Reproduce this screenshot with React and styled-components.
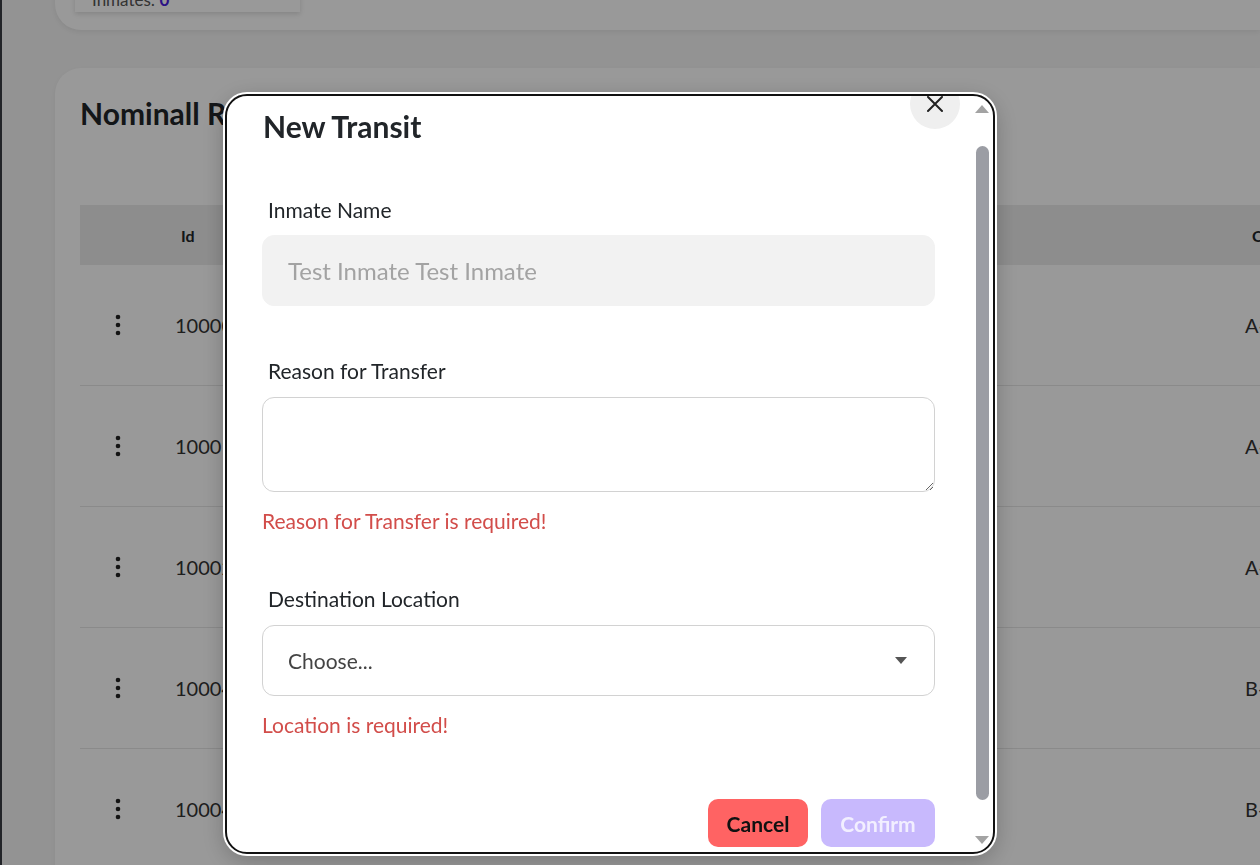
import React, { useLayoutEffect, useRef } from 'react'
import styled, { createGlobalStyle } from 'styled-components'

const GlobalStyle = createGlobalStyle`
   html, body {
      margin: 0;
      padding: 0;
      background: #f6f6f6;
      font-family: Lato, 'Noto Sans', 'Liberation Sans', sans-serif;
      color: #212529;
      overflow: hidden;
   }
   * { box-sizing: border-box; }
`

const Page = styled.div`
   height: 865px;
   overflow: hidden;
   border-left: 2px solid #3a3d44;
`
const PageInner = styled.div`
   padding: 20px 0 40px 53px;
   display: flex;
   flex-direction: column;
   gap: 38px;
`
const TopCard = styled.section`
   height: 140px;
   background: #fff;
   border-radius: 0 0 0 26px;
   box-shadow: 0 2px 6px rgba(0, 0, 0, 0.08);
   padding: 20px 20px 18px;
   display: flex;
`
const StatBox = styled.div`
   width: 225px;
   background: #fff;
   box-shadow: 0 2px 5px rgba(0, 0, 0, 0.14);
   display: flex;
   flex-direction: column;
   justify-content: flex-end;
   padding: 0 17px 2px;
   font-size: 17px;
   line-height: 20px;
   color: #555;
`
const StatValue = styled.b`
   color: #4a1fe0;
`
const ListCard = styled.section`
   background: #fff;
   border-radius: 26px 0 0 0;
   box-shadow: 0 2px 6px rgba(0, 0, 0, 0.06);
   padding: 28px 0 0 25px;
   overflow: hidden;
`
const ListTitle = styled.h2`
   margin: 0 0 75px;
   font-size: 30px;
   line-height: 34px;
   font-weight: 700;
   color: #212529;
   white-space: nowrap;
`
const Table = styled.div`
   width: 1300px;
`
const HeadRow = styled.div`
   display: grid;
   grid-template-columns: 95px 1077px 1fr;
   height: 60px;
   align-items: center;
   background: #ececec;
   font-size: 16px;
   font-weight: 700;
`
const Row = styled.div`
   display: grid;
   grid-template-columns: 95px 1070px 1fr;
   height: 121px;
   align-items: center;
   border-bottom: 1px solid #e6e6e6;
   font-size: 20px;
   color: #333;
`
const HeadCell = styled.div`
   padding-left: ${(p) => p.$pad || 0}px;
`
const Cell = styled.div`
   padding-left: ${(p) => p.$pad || 0}px;
   display: flex;
   align-items: center;
`

const Backdrop = styled.div`
   position: fixed;
   inset: 0;
   background: rgba(0, 0, 0, 0.4);
   padding: 94px 0 0 225px;
`
const Modal = styled.div`
   position: relative;
   width: 770px;
   height: 760px;
   background: #fff;
   border: 2px solid #111;
   border-radius: 22px;
   box-shadow: 0 0 0 2px #fff, 0 6px 24px rgba(0, 0, 0, 0.25);
   overflow: hidden;
`
const ScrollArea = styled.div`
   position: relative;
   height: 100%;
   overflow-y: scroll;
   scrollbar-width: none;
   padding: 55px 58px 46px 35px;
   &::-webkit-scrollbar { display: none; }
`
const CloseButton = styled.button`
   position: absolute;
   top: 25px;
   right: 33px;
   width: 50px;
   height: 50px;
   border: none;
   border-radius: 50%;
   background: #efefef;
   display: flex;
   align-items: center;
   justify-content: center;
   padding: 0;
   cursor: pointer;
`
const Title = styled.h3`
   margin: 0;
   font-size: 30px;
   line-height: 34px;
   font-weight: 700;
   color: #212529;
   padding-left: 1px;
`
const Field = styled.div`
   display: flex;
   flex-direction: column;
   margin-top: ${(p) => p.$top}px;
`
const Label = styled.label`
   font-size: 21px;
   line-height: 24px;
   padding-left: 6px;
   margin-bottom: ${(p) => p.$gap || 14}px;
   color: #212529;
`
const TextInput = styled.input`
   height: 71px;
   border-radius: 12px;
   border: 1px solid #f2f2f2;
   background: #f2f2f2;
   padding: 0 25px;
   font-family: inherit;
   font-size: 24px;
   color: #a3a3a3;
   outline: none;
`
const TextArea = styled.textarea`
   height: 95px;
   border-radius: 12px;
   border: 1px solid #d2d2d2;
   background: #fff;
   padding: 12px 25px;
   font-family: inherit;
   font-size: 20px;
   resize: vertical;
   outline: none;
`
const SelectBox = styled.div`
   position: relative;
   height: 71px;
   border-radius: 12px;
   border: 1px solid #d2d2d2;
   display: flex;
   align-items: center;
   justify-content: space-between;
   padding: 0 27px 0 25px;
   font-size: 21px;
   color: #444;
`
const ErrorText = styled.div`
   margin-top: 17px;
   font-size: 21px;
   line-height: 24px;
   color: #d24d4a;
`
const Footer = styled.div`
   display: flex;
   justify-content: flex-end;
   gap: 13px;
   margin-top: 62px;
`
const ActionButton = styled.button`
   height: 48px;
   min-width: ${(p) => p.$w}px;
   border: none;
   border-radius: 10px;
   font-family: inherit;
   font-size: 21px;
   font-weight: 700;
   background: ${(p) => (p.$variant === 'danger' ? '#ff6363' : '#c8b9fd')};
   color: ${(p) => (p.$variant === 'danger' ? '#111' : '#f2efff')};
   cursor: pointer;
`
const ScrollTrack = styled.div`
   position: absolute;
   top: 0;
   bottom: 0;
   right: 3px;
   width: 15px;
   pointer-events: none;
`
const Arrow = styled.div`
   position: absolute;
   left: 0;
   ${(p) => (p.$down ? 'bottom: 8px;' : 'top: 9px;')}
   width: 0;
   height: 0;
   border-left: 7px solid transparent;
   border-right: 7px solid transparent;
   ${(p) => (p.$down ? 'border-top: 8px solid #a3a3a3;' : 'border-bottom: 8px solid #a3a3a3;')}
`
const Thumb = styled.div`
   position: absolute;
   top: 50px;
   left: 1px;
   width: 13px;
   height: 654px;
   border-radius: 7px;
   background: #9b9da4;
`

const Kebab = () => (
   <svg width='6' height='22' viewBox='0 0 6 22'>
      <circle cx='3' cy='3' r='2.3' fill='#222' />
      <circle cx='3' cy='11' r='2.3' fill='#222' />
      <circle cx='3' cy='19' r='2.3' fill='#222' />
   </svg>
)

const rows = [
   { id: '10000', code: 'A-101' },
   { id: '10001', code: 'A-102' },
   { id: '10002', code: 'A-103' },
   { id: '10004', code: 'B-201' },
   { id: '10004', code: 'B-202' },
]

const App = () => {
   const pageRef = useRef(null)
   const bodyRef = useRef(null)

   useLayoutEffect(() => {
      if (pageRef.current) pageRef.current.scrollTop = 130
      if (bodyRef.current) bodyRef.current.scrollTop = 42
   }, [])

   return (
      <>
         <GlobalStyle />
         <Page ref={pageRef}>
            <PageInner>
               <TopCard>
                  <StatBox>
                     <span>Total: 12</span>
                     <span>
                        Inmates: <StatValue>0</StatValue>
                     </span>
                  </StatBox>
               </TopCard>
               <ListCard>
                  <ListTitle>Nominall Roll</ListTitle>
                  <Table>
                     <HeadRow>
                        <HeadCell />
                        <HeadCell $pad={6}>Id</HeadCell>
                        <HeadCell>Cell</HeadCell>
                     </HeadRow>
                     {rows.map((r, i) => (
                        <Row key={i}>
                           <Cell $pad={35}>
                              <Kebab />
                           </Cell>
                           <Cell>{r.id}</Cell>
                           <Cell>{r.code}</Cell>
                        </Row>
                     ))}
                  </Table>
               </ListCard>
            </PageInner>
         </Page>

         <Backdrop>
            <Modal>
               <ScrollArea ref={bodyRef}>
                  <CloseButton aria-label='Close'>
                     <svg width='18' height='18' viewBox='0 0 18 18'>
                        <path d='M2 2 L16 16 M16 2 L2 16' stroke='#222' strokeWidth='2' strokeLinecap='round' />
                     </svg>
                  </CloseButton>
                  <Title>New Transit</Title>

                  <Field $top={55}>
                     <Label $gap={13}>Inmate Name</Label>
                     <TextInput disabled value='Test Inmate Test Inmate' readOnly />
                  </Field>

                  <Field $top={53}>
                     <Label>Reason for Transfer</Label>
                     <TextArea />
                     <ErrorText>Reason for Transfer is required!</ErrorText>
                  </Field>

                  <Field $top={54}>
                     <Label>Destination Location</Label>
                     <SelectBox>
                        <span>Choose...</span>
                        <svg width='12' height='7' viewBox='0 0 12 7'>
                           <path d='M0 0 L12 0 L6 7 Z' fill='#555' />
                        </svg>
                     </SelectBox>
                     <ErrorText>Location is required!</ErrorText>
                  </Field>

                  <Footer>
                     <ActionButton $variant='danger' $w={100}>
                        Cancel
                     </ActionButton>
                     <ActionButton $w={114}>Confirm</ActionButton>
                  </Footer>
               </ScrollArea>
               <ScrollTrack>
                  <Arrow />
                  <Thumb />
                  <Arrow $down />
               </ScrollTrack>
            </Modal>
         </Backdrop>
      </>
   )
}

export default App
